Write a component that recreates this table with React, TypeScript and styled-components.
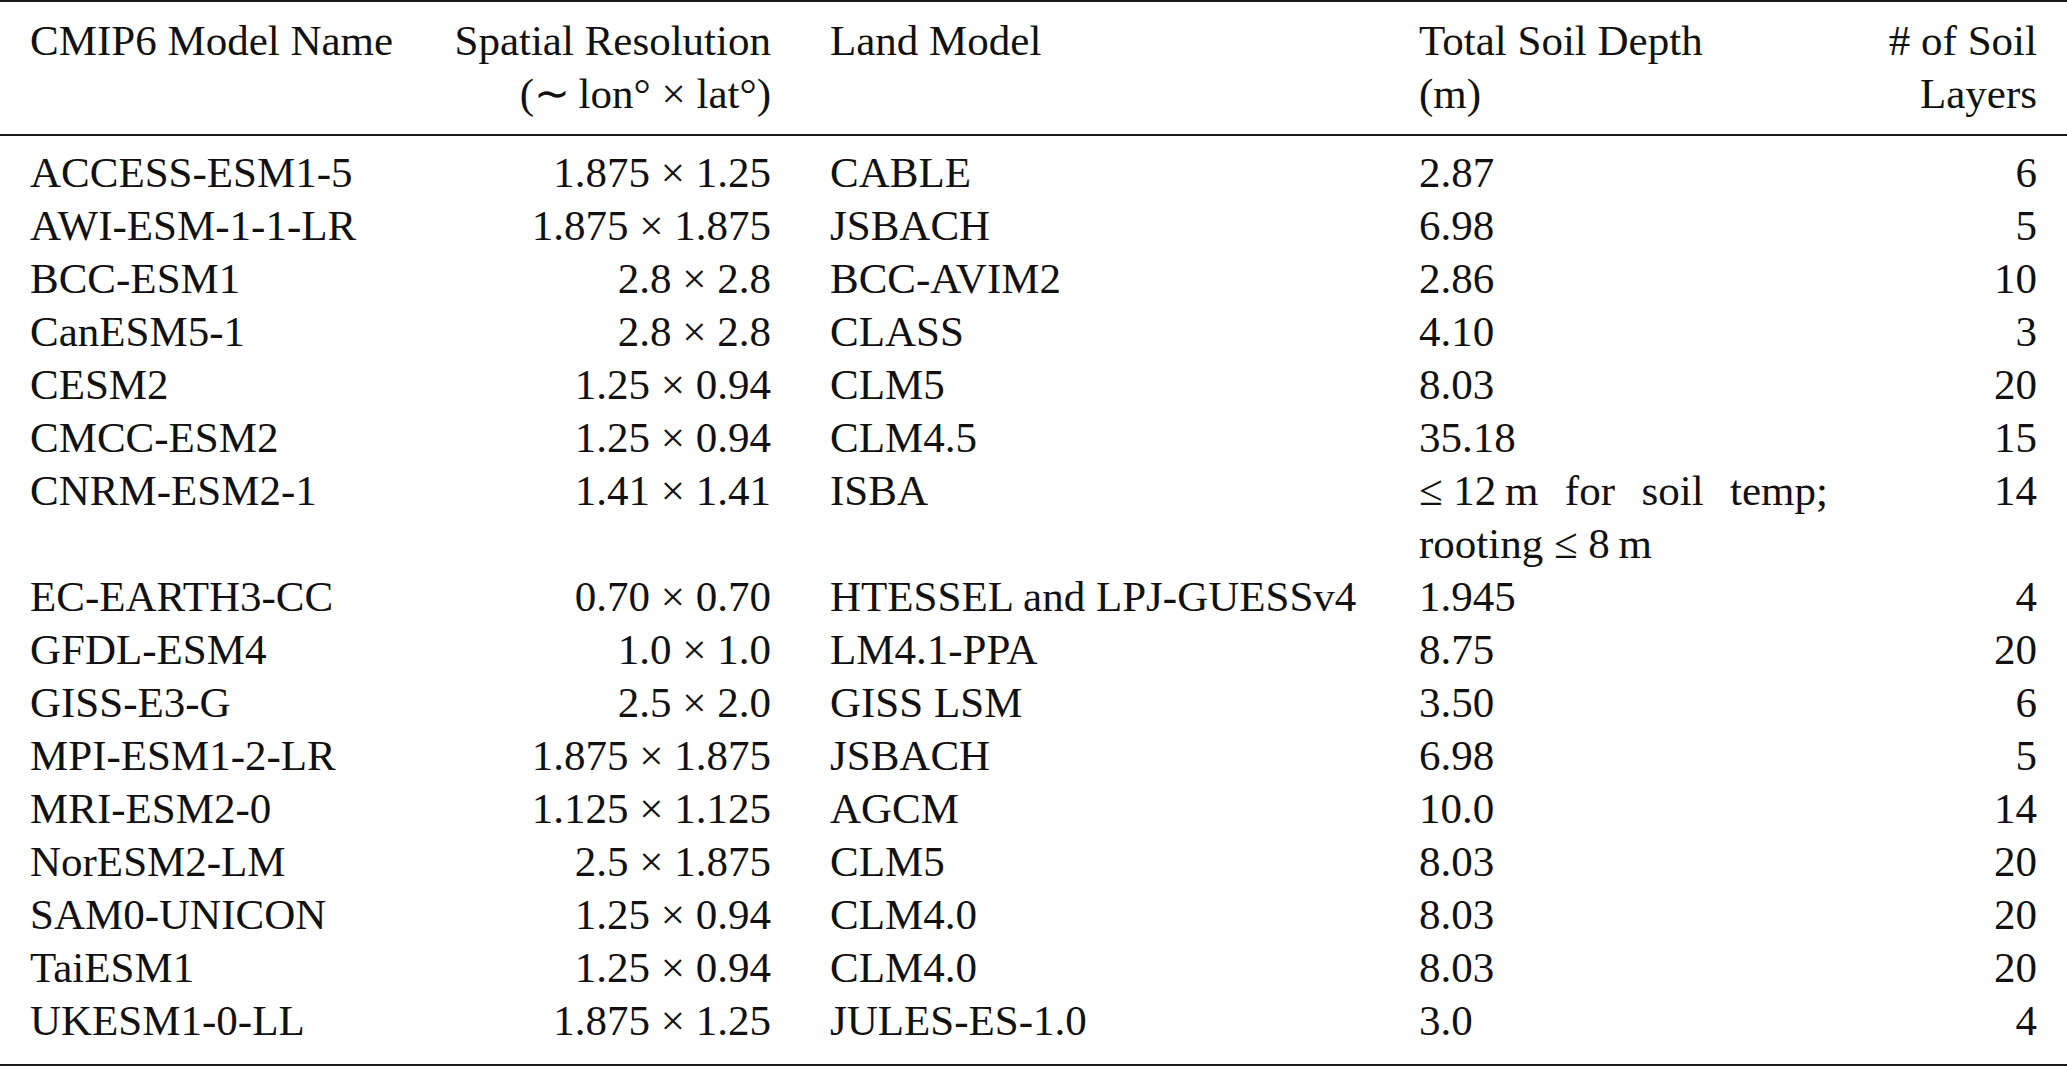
import React from 'react';
import styled, { createGlobalStyle } from 'styled-components';

const GlobalStyle = createGlobalStyle`
    html, body {
        margin: 0;
        padding: 0;
        background: #ffffff;
    }
    body {
        font-family: "Liberation Serif", "Times New Roman", serif;
        color: #111111;
    }
`;

const columns = '364px 318px 530px 409px 150px';

const Table = styled.div`
    width: 2067px;
    height: 1068px;
    display: flex;
    flex-direction: column;
    font-size: 43px;
    line-height: 53px;
`;

const Rule = styled.div<{ $thick?: boolean }>`
    height: ${({ $thick }) => ($thick ? '2px' : '1.5px')};
    background: #1a1a1a;
`;

const Head = styled.div`
    padding: 12px 30px 14px;
`;

const Body = styled.div`
    padding: 10px 30px 17px;
`;

const Row = styled.div`
    display: grid;
    grid-template-columns: ${columns};
    column-gap: 59px;
`;

const Cell = styled.div<{ $align?: 'left' | 'right' | 'justify' }>`
    text-align: ${({ $align }) => $align || 'left'};
    white-space: ${({ $align }) => ($align === 'justify' ? 'normal' : 'nowrap')};
`;

type Model = {
    name: string;
    res: string;
    land: string;
    depth: string;
    layers: string;
    wrap?: boolean;
};

const models: Model[] = [
    { name: 'ACCESS-ESM1-5', res: '1.875 × 1.25', land: 'CABLE', depth: '2.87', layers: '6' },
    { name: 'AWI-ESM-1-1-LR', res: '1.875 × 1.875', land: 'JSBACH', depth: '6.98', layers: '5' },
    { name: 'BCC-ESM1', res: '2.8 × 2.8', land: 'BCC-AVIM2', depth: '2.86', layers: '10' },
    { name: 'CanESM5-1', res: '2.8 × 2.8', land: 'CLASS', depth: '4.10', layers: '3' },
    { name: 'CESM2', res: '1.25 × 0.94', land: 'CLM5', depth: '8.03', layers: '20' },
    { name: 'CMCC-ESM2', res: '1.25 × 0.94', land: 'CLM4.5', depth: '35.18', layers: '15' },
    {
        name: 'CNRM-ESM2-1',
        res: '1.41 × 1.41',
        land: 'ISBA',
        depth: '\u2264\u200512\u2009m for soil temp; rooting\u00a0\u2264\u20058\u2009m',
        layers: '14',
        wrap: true,
    },
    { name: 'EC-EARTH3-CC', res: '0.70 × 0.70', land: 'HTESSEL and LPJ-GUESSv4', depth: '1.945', layers: '4' },
    { name: 'GFDL-ESM4', res: '1.0 × 1.0', land: 'LM4.1-PPA', depth: '8.75', layers: '20' },
    { name: 'GISS-E3-G', res: '2.5 × 2.0', land: 'GISS LSM', depth: '3.50', layers: '6' },
    { name: 'MPI-ESM1-2-LR', res: '1.875 × 1.875', land: 'JSBACH', depth: '6.98', layers: '5' },
    { name: 'MRI-ESM2-0', res: '1.125 × 1.125', land: 'AGCM', depth: '10.0', layers: '14' },
    { name: 'NorESM2-LM', res: '2.5 × 1.875', land: 'CLM5', depth: '8.03', layers: '20' },
    { name: 'SAM0-UNICON', res: '1.25 × 0.94', land: 'CLM4.0', depth: '8.03', layers: '20' },
    { name: 'TaiESM1', res: '1.25 × 0.94', land: 'CLM4.0', depth: '8.03', layers: '20' },
    { name: 'UKESM1-0-LL', res: '1.875 × 1.25', land: 'JULES-ES-1.0', depth: '3.0', layers: '4' },
];

const App = () => {
    return (
        <>
            <GlobalStyle />
            <Table>
                <Rule $thick />
                <Head>
                    <Row>
                        <Cell>CMIP6 Model Name</Cell>
                        <Cell $align="right">
                            Spatial Resolution
                            <br />
                            {'(\u223c\u2009lon° × lat°)'}
                        </Cell>
                        <Cell>Land Model</Cell>
                        <Cell>
                            Total Soil Depth
                            <br />
                            (m)
                        </Cell>
                        <Cell $align="right">
                            # of Soil
                            <br />
                            Layers
                        </Cell>
                    </Row>
                </Head>
                <Rule />
                <Body>
                    {models.map((m) => (
                        <Row key={m.name}>
                            <Cell>{m.name}</Cell>
                            <Cell $align="right">{m.res}</Cell>
                            <Cell>{m.land}</Cell>
                            <Cell $align={m.wrap ? 'justify' : 'left'}>{m.depth}</Cell>
                            <Cell $align="right">{m.layers}</Cell>
                        </Row>
                    ))}
                </Body>
                <Rule $thick />
            </Table>
        </>
    );
};

export default App;
